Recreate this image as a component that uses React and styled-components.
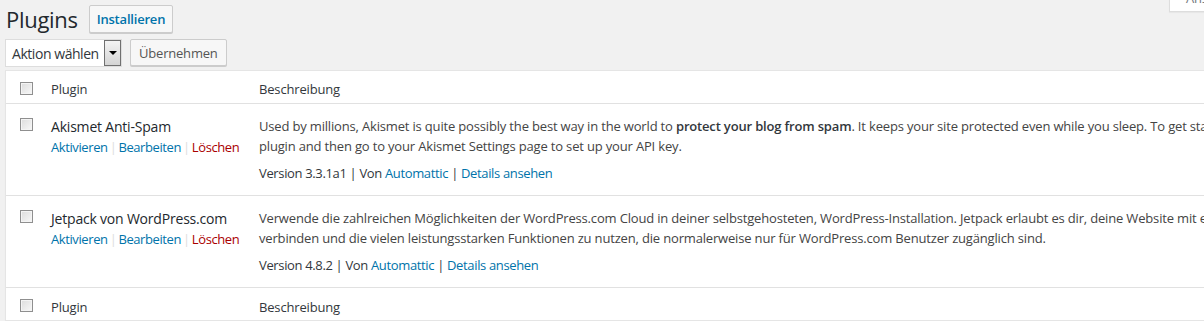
import React from 'react';
import styled, { createGlobalStyle } from 'styled-components';

const GlobalStyle = createGlobalStyle`
  body {
    margin: 0;
    background: #f1f1f1;
    font-family: "Open Sans", "Noto Sans", sans-serif;
    font-size: 13px;
    letter-spacing: -0.17px;
    color: #444;
    overflow: hidden;
  }
`;

const Wrap = styled.div`
  width: 1199px;
  padding-left: 5px;
`;

const ScreenTab = styled.div`
  float: right;
  width: 135px;
  height: 27px;
  margin: -15px -100px 0 0;
  box-sizing: border-box;
  padding: 3px 0 0 16px;
  background: #fff;
  border: 1px solid #ddd;
  border-top: none;
  box-shadow: 0 1px 1px rgba(0, 0, 0, 0.04);
  color: #72777c;
  font-size: 13px;
  line-height: 20px;
  white-space: nowrap;
`;

const TitleRow = styled.div`
  display: flex;
  align-items: center;
  gap: 11px;
  padding-top: 5px;
`;

const Heading = styled.h1`
  margin: 0;
  font-size: 22px;
  font-weight: 400;
  line-height: 28px;
  color: #23282d;
  letter-spacing: -0.3px;
  padding-left: 1px;
`;

const Button = styled.button`
  height: ${p => p.h || 28}px;
  padding: 0 ${p => p.px || 7}px;
  font-family: inherit;
  font-size: 13px;
  letter-spacing: -0.2px;
  font-weight: ${p => (p.primary ? 600 : 400)};
  color: ${p => (p.primary ? '#0073aa' : '#555')};
  background: #f7f7f7;
  border: 1px solid #ccc;
  border-radius: 2px;
  box-shadow: 0 1px 0 #ccc;
  cursor: pointer;
`;

const ActionRow = styled.div`
  display: flex;
  align-items: flex-start;
  gap: 8px;
  margin-top: 6px;
`;

const Select = styled.div`
  display: flex;
  align-items: center;
  justify-content: space-between;
  box-sizing: border-box;
  width: 117px;
  height: 28px;
  padding: 0 0 0 6px;
  background: #fff;
  border: 1px solid #ddd;
  font-size: 14px;
  letter-spacing: -0.45px;
  color: #32373c;
  white-space: nowrap;
`;

const Arrow = styled.span`
  display: flex;
  align-items: center;
  justify-content: center;
  box-sizing: border-box;
  width: 17px;
  height: 26px;
  border: 1px solid #707070;
  background: linear-gradient(#f4f4f4, #d4d4d4);
  &::after {
    content: '';
    border-left: 4px solid transparent;
    border-right: 4px solid transparent;
    border-top: 4px solid #000;
  }
`;

const Table = styled.div`
  width: 1500px;
  margin-top: 3px;
  background: #fff;
  border: 1px solid #e5e5e5;
  box-shadow: 0 1px 1px rgba(0, 0, 0, 0.04);
`;

const Row = styled.div`
  display: grid;
  grid-template-columns: 35px 208px 1fr;
  border-top: ${p => (p.first ? 'none' : '1px solid #e1e1e1')};
  min-height: ${p => p.h}px;
  box-sizing: border-box;
`;

const CheckCell = styled.div`
  padding: ${p => p.top}px 0 0 14px;
`;

const Check = styled.span`
  display: block;
  box-sizing: border-box;
  width: 13px;
  height: 13px;
  border: 1px solid #8f8f8f;
  background: linear-gradient(135deg, #dcdcdc, #f8f8f8);
  box-shadow: inset 0 0 0 1px #f4f4f4;
`;

const Cell = styled.div`
  padding: ${p => p.top}px 10px 0 10px;
  line-height: 19.5px;
  white-space: nowrap;
`;

const HeadLabel = styled.span`
  color: #32373c;
  font-size: 13px;
`;

const PluginName = styled.div`
  font-size: 14px;
  font-weight: 400;
  color: #23282d;
  line-height: 20px;
  letter-spacing: -0.2px;
`;

const Actions = styled.div`
  display: flex;
  align-items: center;
  margin-top: 1px;
  letter-spacing: -0.4px;
`;

const Link = styled.a`
  color: ${p => (p.danger ? '#a00' : '#0073aa')};
  text-decoration: none;
`;

const Sep = styled.span`
  color: #ddd;
  margin: 0 2px;
`;

const Desc = styled.div`
  color: #444;
  b {
    font-weight: 600;
    color: #32373c;
  }
`;

const Meta = styled.div`
  margin-top: 8px;
  color: #32373c;
  white-space: pre;
  letter-spacing: -0.35px;
`;

const plugins = [
  {
    name: 'Akismet Anti-Spam',
    version: '3.3.1a1',
    lines: [
      <>
        Used by millions, Akismet is quite possibly the best way in the world to <b>protect your blog from spam</b>. It keeps your site protected even while you sleep. To get started: activate the Akismet
      </>,
      'plugin and then go to your Akismet Settings page to set up your API key.',
    ],
  },
  {
    name: 'Jetpack von WordPress.com',
    version: '4.8.2',
    lines: [
      'Verwende die zahlreichen Möglichkeiten der WordPress.com Cloud in deiner selbstgehosteten, WordPress-Installation. Jetpack erlaubt es dir, deine Website mit einem WordPress.com-Konto zu',
      'verbinden und die vielen leistungsstarken Funktionen zu nutzen, die normalerweise nur für WordPress.com Benutzer zugänglich sind.',
    ],
  },
];

const HeaderRow = ({ first }) => (
  <Row first={first} h={first ? 32 : 33}>
    <CheckCell top={11}>
      <Check />
    </CheckCell>
    <Cell top={first ? 9 : 10}>
      <HeadLabel>Plugin</HeadLabel>
    </Cell>
    <Cell top={first ? 9 : 10}>
      <HeadLabel>Beschreibung</HeadLabel>
    </Cell>
  </Row>
);

const PluginRow = ({ plugin }) => (
  <Row h={92}>
    <CheckCell top={14}>
      <Check />
    </CheckCell>
    <Cell top={13}>
      <PluginName>{plugin.name}</PluginName>
      <Actions>
        <Link href="#">Aktivieren</Link>
        <Sep>|</Sep>
        <Link href="#">Bearbeiten</Link>
        <Sep>|</Sep>
        <Link href="#" danger>Löschen</Link>
      </Actions>
    </Cell>
    <Cell top={13}>
      <Desc>
        {plugin.lines.map((l, i) => (
          <div key={i}>{l}</div>
        ))}
      </Desc>
      <Meta>
        {`Version ${plugin.version} | Von `}
        <Link href="#">Automattic</Link>
        {' | '}
        <Link href="#">Details ansehen</Link>
      </Meta>
    </Cell>
  </Row>
);

export default function App() {
  return (
    <Wrap>
      <GlobalStyle />
      <ScreenTab>Ansicht anpassen ▾</ScreenTab>
      <TitleRow>
        <Heading>Plugins</Heading>
        <Button primary>Installieren</Button>
      </TitleRow>
      <ActionRow>
        <Select>
          Aktion wählen
          <Arrow />
        </Select>
        <Button h={27} px={8}>Übernehmen</Button>
      </ActionRow>
      <Table>
        <HeaderRow first />
        {plugins.map(p => (
          <PluginRow key={p.name} plugin={p} />
        ))}
        <HeaderRow />
      </Table>
    </Wrap>
  );
}
